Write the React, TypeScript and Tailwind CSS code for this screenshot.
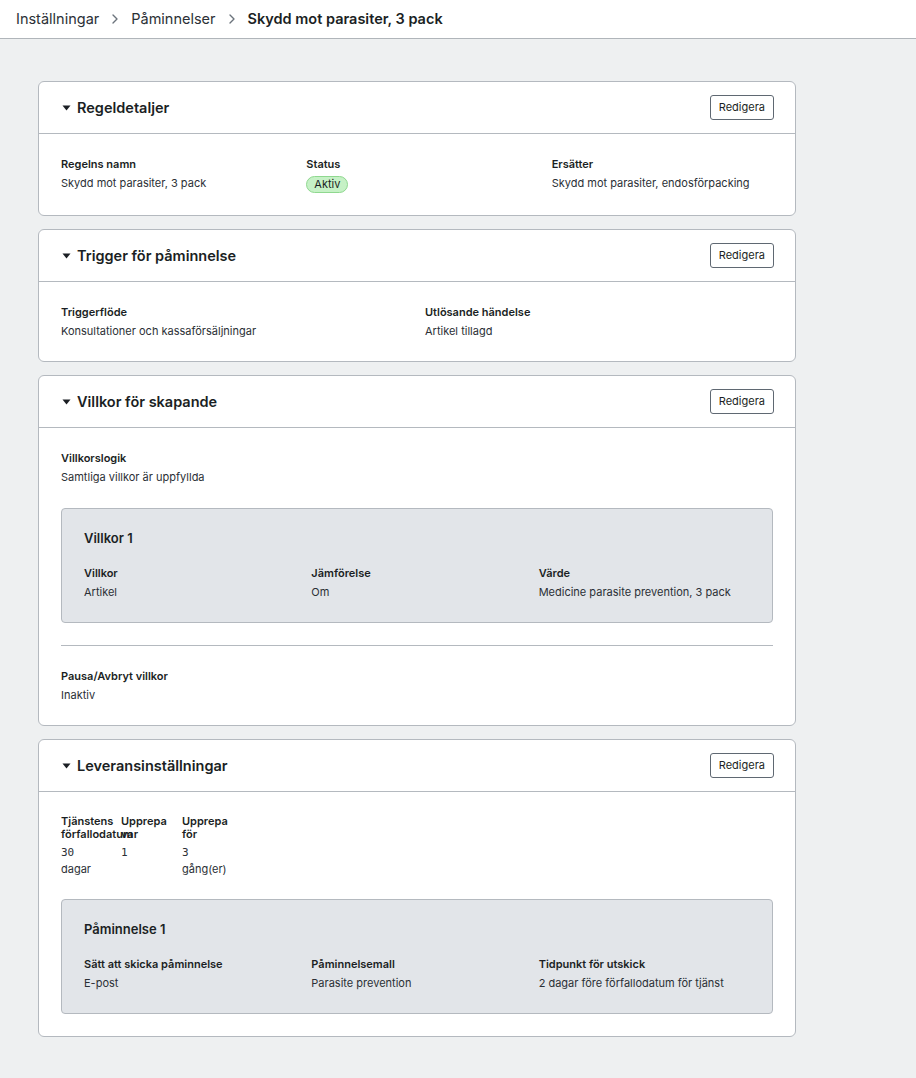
import React from 'react';
import { ChevronRight } from 'lucide-react';

type Field = { label: string; value: React.ReactNode };

const Caret: React.FC = () => (
  <svg width="9" height="6" viewBox="0 0 9 6" className="mr-[6px] text-[#1b1f24]">
    <path d="M0.5 0.5 L8.5 0.5 L4.5 5.5 Z" fill="currentColor" />
  </svg>
);

const FieldItem: React.FC<Field> = ({ label, value }) => (
  <div>
    <div className="text-[11px] font-semibold leading-4 text-[#1b1f24]">{label}</div>
    <div className="mt-[3px] text-[11px] leading-4 text-[#2b3036]">{value}</div>
  </div>
);

const Section: React.FC<{ title: string; children: React.ReactNode }> = ({ title, children }) => (
  <section className="rounded-md border border-[#b4b9bf] bg-white">
    <div className="flex items-center justify-between border-b border-[#b4b9bf] py-[13px] pl-[23px] pr-[21px]">
      <h2 className="flex items-center text-[14.5px] font-semibold text-[#1b1f24]">
        <Caret />
        {title}
      </h2>
      <button className="h-[25px] rounded-[3px] border border-[#5f6872] bg-white px-2 text-[11px] text-[#1b1f24]">
        Redigera
      </button>
    </div>
    <div className="px-[22px] py-[22px]">{children}</div>
  </section>
);

const GrayBox: React.FC<{ title: string; fields: Field[] }> = ({ title, fields }) => (
  <div className="rounded-[4px] border border-[#b4b9bf] bg-[#e2e5e9] px-[22px] pb-[22px] pt-[19px]">
    <h3 className="text-[13px] font-semibold leading-5 text-[#1b1f24]">{title}</h3>
    <div className="mt-[17px] grid grid-cols-3 gap-4">
      {fields.map((f) => (
        <FieldItem key={f.label} label={f.label} value={f.value} />
      ))}
    </div>
  </div>
);

export default function App() {
  return (
    <div className="min-h-[1078px] bg-[#eef0f1] font-['Inter',sans-serif]">
      <header className="flex h-[39px] items-center border-b border-[#b0b5ba] bg-white pl-4 text-[14.5px]">
        <span className="text-[#2b3036]">Inställningar</span>
        <ChevronRight className="mx-2 h-4 w-4 text-[#6b737c]" strokeWidth={2} />
        <span className="text-[#2b3036]">Påminnelser</span>
        <ChevronRight className="mx-2 h-4 w-4 text-[#6b737c]" strokeWidth={2} />
        <span className="font-semibold text-[#1b1f24]">Skydd mot parasiter, 3 pack</span>
      </header>

      <main className="ml-[38px] flex w-[758px] flex-col gap-[13px] pb-[42px] pt-[42px]">
        <Section title="Regeldetaljer">
          <div className="grid grid-cols-3 gap-6">
            <FieldItem label="Regelns namn" value="Skydd mot parasiter, 3 pack" />
            <div>
              <div className="text-[11px] font-semibold leading-4 text-[#1b1f24]">Status</div>
              <div className="mt-[4px] w-fit rounded-full border border-[#8fd88f] bg-[#c6f1c6] px-[7px] text-[11px] leading-[15px] text-[#1b1f24]">
                Aktiv
              </div>
            </div>
            <FieldItem label="Ersätter" value="Skydd mot parasiter, endosförpacking" />
          </div>
        </Section>

        <Section title="Trigger för påminnelse">
          <div className="grid grid-cols-2 gap-4">
            <FieldItem label="Triggerflöde" value="Konsultationer och kassaförsäljningar" />
            <FieldItem label="Utlösande händelse" value="Artikel tillagd" />
          </div>
        </Section>

        <Section title="Villkor för skapande">
          <FieldItem label="Villkorslogik" value="Samtliga villkor är uppfyllda" />
          <div className="mt-[23px]">
            <GrayBox
              title="Villkor 1"
              fields={[
                { label: 'Villkor', value: 'Artikel' },
                { label: 'Jämförelse', value: 'Om' },
                { label: 'Värde', value: 'Medicine parasite prevention, 3 pack' },
              ]}
            />
          </div>
          <hr className="my-[22px] border-[#b4b9bf]" />
          <FieldItem label="Pausa/Avbryt villkor" value="Inaktiv" />
        </Section>

        <Section title="Leveransinställningar">
          {/* narrow columns; the long label runs into its neighbour */}
          <div className="grid w-fit grid-cols-[52px_53px_52px] gap-2 pt-[1px]">
            {[
              { label: 'Tjänstens förfallodatum', num: '30', unit: 'dagar' },
              { label: 'Upprepa var', num: '1', unit: '' },
              { label: 'Upprepa för', num: '3', unit: 'gång(er)' },
            ].map((c) => (
              <div key={c.label}>
                <div className="text-[11px] font-semibold leading-[13px] text-[#1b1f24]">{c.label}</div>
                <div className="mt-[3px] text-[11px] leading-[17px] text-[#2b3036]">
                  <div className="font-['DejaVu_Sans_Mono',monospace]">{c.num}</div>
                  {c.unit && <div>{c.unit}</div>}
                </div>
              </div>
            ))}
          </div>
          <div className="mt-[21px]">
            <GrayBox
              title="Påminnelse 1"
              fields={[
                { label: 'Sätt att skicka påminnelse', value: 'E-post' },
                { label: 'Påminnelsemall', value: 'Parasite prevention' },
                { label: 'Tidpunkt för utskick', value: '2 dagar före förfallodatum för tjänst' },
              ]}
            />
          </div>
        </Section>
      </main>
    </div>
  );
}
